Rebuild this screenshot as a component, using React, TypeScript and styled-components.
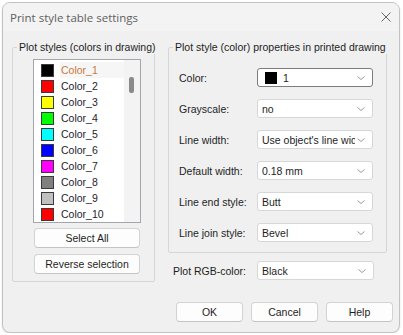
import React from "react";
import styled, { createGlobalStyle } from "styled-components";

const Global = createGlobalStyle`
  * { box-sizing: border-box; }
  html, body { margin: 0; padding: 0; background: #ffffff; }
  body { font-family: "Liberation Sans", Arial, sans-serif; font-size: 10.5px; color: #1e1e1e; }
`;

const Window = styled.div`
  margin: 2px 0 0 2px;
  width: 398px;
  height: 331px;
  border: 1px solid #c2c2c2;
  border-radius: 8px;
  background: #f0f0f0;
  display: flex;
  flex-direction: column;
  overflow: hidden;
  box-shadow: 0 1px 2px rgba(0, 0, 0, 0.12);
`;

const TitleBar = styled.div`
  height: 28px;
  flex: none;
  display: flex;
  align-items: center;
  justify-content: space-between;
  padding: 0 8px 0 7px;
  background: #f3f3f3;
`;

const Title = styled.span`
  font-family: "Segoe UI", "Open Sans", sans-serif;
  font-size: 11.5px;
  color: #5f5f5f;
`;

const CloseIcon = styled.svg`
  width: 10px;
  height: 10px;
  display: block;
`;

const Body = styled.div`
  display: flex;
  gap: 13px;
  align-items: flex-start;
  padding: 10px 12px 0 9px;
`;

const Group = styled.fieldset<{ $w: number; $h: number }>`
  margin: 0;
  padding: 0;
  min-width: 0;
  width: ${(p) => p.$w}px;
  height: ${(p) => p.$h}px;
  border: 1px solid #d6d6d6;
  border-radius: 2px;
`;

const Legend = styled.legend`
  margin-left: 4px;
  padding: 0 2px;
  line-height: 13px;
  font-size: 10.5px;
  white-space: nowrap;
  color: #1e1e1e;
`;

const LeftInner = styled.div`
  display: flex;
  flex-direction: column;
  padding: 5px 0 0 20px;
`;

const ListBox = styled.div`
  width: 108px;
  height: 164px;
  background: #ffffff;
  border: 1px solid #a3a6ad;
  display: flex;
`;

const Items = styled.div`
  flex: 1;
  display: flex;
  flex-direction: column;
  padding-top: 2px;
`;

const Item = styled.div`
  height: 16px;
  display: flex;
  align-items: center;
  flex: none;
`;

const Swatch = styled.span<{ $c: string; $size?: number }>`
  flex: none;
  width: ${(p) => p.$size ?? 13}px;
  height: ${(p) => p.$size ?? 13}px;
  background: ${(p) => p.$c};
  border: 1px solid #3a3a3a;
`;

const ItemSwatch = styled(Swatch)`
  margin-left: 7px;
`;

const ItemLabel = styled.span<{ $sel?: boolean }>`
  flex: 1;
  height: 16px;
  line-height: 16px;
  margin-left: 6px;
  padding-left: 1px;
  background: ${(p) => (p.$sel ? "#f6f6f6" : "transparent")};
  color: ${(p) => (p.$sel ? "#c9783a" : "#1e1e2e")};
`;

const Track = styled.div`
  width: 16px;
  flex: none;
  background: #f3f3f3;
  padding: 17px 0 0 5px;
`;

const Thumb = styled.div`
  width: 5px;
  height: 16px;
  border-radius: 2px;
  background: #8a8a8a;
`;

const Button = styled.button<{ $w: number }>`
  width: ${(p) => p.$w}px;
  height: 20px;
  padding: 0;
  background: #fdfdfd;
  border: 1px solid #d3d3d3;
  border-bottom-color: #c4c4c4;
  border-radius: 4px;
  font-family: "Liberation Sans", Arial, sans-serif;
  font-size: 10.5px;
  color: #1e1e1e;
`;

const ListButtons = styled.div`
  display: flex;
  flex-direction: column;
  gap: 6px;
  padding: 5px 0 0 1px;
`;

const RightCol = styled.div`
  display: flex;
  flex-direction: column;
`;

const Rows = styled.div`
  display: flex;
  flex-direction: column;
  gap: 12px;
  padding: 14px 0 0 10px;
`;

const Row = styled.div<{ $label: number }>`
  display: flex;
  align-items: center;
  & > span:first-child {
    width: ${(p) => p.$label}px;
    flex: none;
  }
`;

const FieldLabel = styled.span``;

const Select = styled.div<{ $focused?: boolean; $w?: number }>`
  width: ${(p) => p.$w ?? 116}px;
  height: 19px;
  background: #ffffff;
  border: 1px solid ${(p) => (p.$focused ? "#7c7c7c" : "#d7d7d7")};
  border-radius: 3px;
  display: flex;
  align-items: center;
  padding: 0 4px 0 4px;
`;

const Value = styled.span`
  flex: 1;
  overflow: hidden;
  white-space: nowrap;
  display: flex;
  align-items: center;
  gap: 6px;
  margin-right: 2px;
`;

const ValueSwatch = styled(Swatch)`
  margin-left: 3px;
  background: #000;
  border-color: #000;
`;

const Chevron = styled.svg`
  width: 8px;
  height: 4px;
  flex: none;
  display: block;
  margin-right: 3px;
`;

const RgbRow = styled(Row)`
  margin-top: 8px;
  padding-left: 5px;
`;

const Footer = styled.div`
  margin-top: auto;
  display: flex;
  justify-content: flex-end;
  gap: 8px;
  padding: 0 6px 10px 0;
`;

const colors = [
  "#000000",
  "#ff0000",
  "#ffff00",
  "#00ff00",
  "#00ffff",
  "#0000ff",
  "#ff00ff",
  "#808080",
  "#c0c0c0",
  "#ff0000",
];

const Chev = () => (
  <Chevron viewBox="0 0 8 4">
    <polyline points="0.5,0.5 4,3.5 7.5,0.5" fill="none" stroke="#9a9a9a" strokeWidth="1" />
  </Chevron>
);

const props: { label: string; value: string; focused?: boolean; swatch?: boolean }[] = [
  { label: "Color:", value: "1", focused: true, swatch: true },
  { label: "Grayscale:", value: "no" },
  { label: "Line width:", value: "Use object's line width" },
  { label: "Default width:", value: "0.18 mm" },
  { label: "Line end style:", value: "Butt" },
  { label: "Line join style:", value: "Bevel" },
];

export default function App() {
  return (
    <>
      <Global />
      <Window>
        <TitleBar>
          <Title>Print style table settings</Title>
          <CloseIcon viewBox="0 0 10 10">
            <path d="M0.5 0.5 L9.5 9.5 M9.5 0.5 L0.5 9.5" stroke="#666" strokeWidth="1" fill="none" />
          </CloseIcon>
        </TitleBar>
        <Body>
          <Group $w={143} $h={241}>
            <Legend>Plot styles (colors in drawing)</Legend>
            <LeftInner>
              <ListBox>
                <Items>
                  {colors.map((c, i) => (
                    <Item key={i}>
                      <ItemSwatch $c={c} />
                      <ItemLabel $sel={i === 0}>Color_{i + 1}</ItemLabel>
                    </Item>
                  ))}
                </Items>
                <Track>
                  <Thumb />
                </Track>
              </ListBox>
              <ListButtons>
                <Button $w={106}>Select All</Button>
                <Button $w={106}>Reverse selection</Button>
              </ListButtons>
            </LeftInner>
          </Group>
          <RightCol>
            <Group $w={219} $h={212}>
              <Legend>Plot style (color) properties in printed drawing</Legend>
              <Rows>
                {props.map((p) => (
                  <Row $label={78} key={p.label}>
                    <FieldLabel>{p.label}</FieldLabel>
                    <Select $focused={p.focused}>
                      <Value>
                        {p.swatch && <ValueSwatch $c="#000" $size={12} />}
                        {p.value}
                      </Value>
                      <Chev />
                    </Select>
                  </Row>
                ))}
              </Rows>
            </Group>
            <RgbRow $label={84}>
              <FieldLabel>Plot RGB-color:</FieldLabel>
              <Select $w={117}>
                <Value>Black</Value>
                <Chev />
              </Select>
            </RgbRow>
          </RightCol>
        </Body>
        <Footer>
          <Button $w={67}>OK</Button>
          <Button $w={67}>Cancel</Button>
          <Button $w={67}>Help</Button>
        </Footer>
      </Window>
    </>
  );
}
